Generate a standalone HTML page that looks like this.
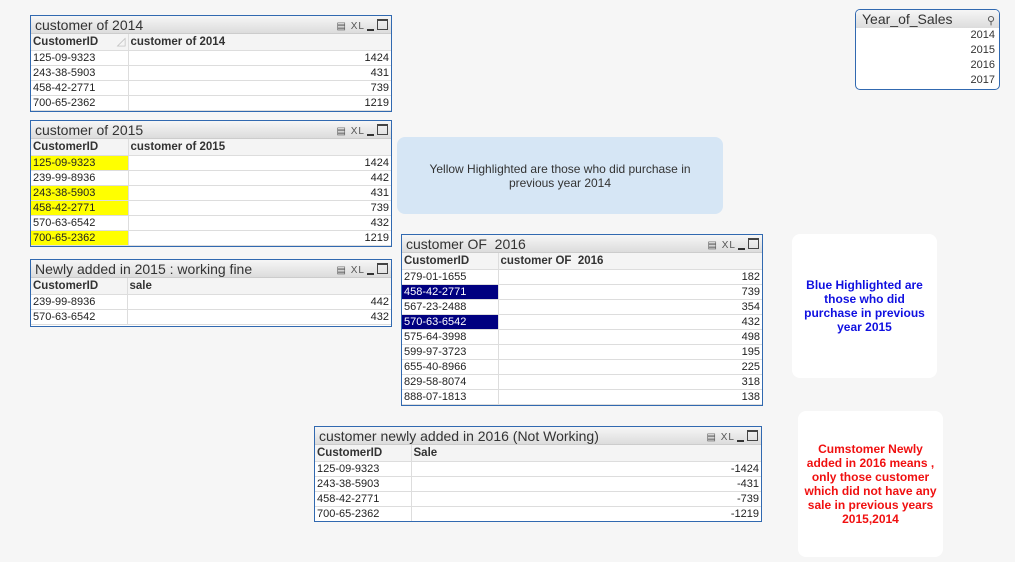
<!DOCTYPE html>
<html><head><meta charset="utf-8"><style>
body{margin:0;width:1015px;height:562px;background:#f6f6f6;font-family:"Liberation Sans",sans-serif;position:relative;overflow:hidden}
.box{position:absolute;border:1px solid #3169b0;background:#fff;box-sizing:border-box;overflow:hidden}
.t{height:18px;background:linear-gradient(#f6f6f6,#dcdcdc);font-size:14px;color:#333;line-height:18px;padding-left:4px;position:relative;border-bottom:1px solid #ccc;box-sizing:border-box}
.ic{position:absolute;right:3px;top:2px;font-size:10px;color:#555;letter-spacing:1px}
.ic b{display:inline-block;width:9px;height:8px;border:1px solid #444;border-top-width:2px;vertical-align:-1px;margin-left:3px}
.ic i{display:inline-block;width:7px;height:2px;background:#333;vertical-align:-2px;margin-left:2px}
table{border-collapse:collapse;width:100%;font-size:11px;color:#222;table-layout:fixed}
td{height:15px;padding:0 2px;border-bottom:1px solid #ddd;border-right:1px solid #ddd;line-height:14px;white-space:nowrap;overflow:hidden;box-sizing:border-box}
tr.h td{height:16px;font-weight:bold;color:#333;background:#f4f4f4;font-size:11.5px}
td.r{text-align:right;border-right:none}
.y{background:#ffff00}
.n{background:#000080;color:#fff}
.note{position:absolute;border-radius:8px;display:flex;align-items:center;justify-content:center;text-align:center;box-sizing:border-box}
</style></head><body>

<div class="box" style="left:30px;top:15px;width:362px;height:97px">
<div class="t">customer of 2014<span class="ic">&#9636; XL<i></i><b></b></span></div>
<table><colgroup><col style="width:97px"><col></colgroup>
<tr class="h"><td>CustomerID <span style="float:right;color:#bbb;font-weight:normal">◿</span></td><td class="r" style="text-align:left">customer of 2014</td></tr>
<tr><td>125-09-9323</td><td class="r">1424</td></tr>
<tr><td>243-38-5903</td><td class="r">431</td></tr>
<tr><td>458-42-2771</td><td class="r">739</td></tr>
<tr><td>700-65-2362</td><td class="r">1219</td></tr>
</table></div>

<div class="box" style="left:30px;top:120px;width:362px;height:127px">
<div class="t">customer of 2015<span class="ic">&#9636; XL<i></i><b></b></span></div>
<table><colgroup><col style="width:97px"><col></colgroup>
<tr class="h"><td>CustomerID</td><td class="r" style="text-align:left">customer of 2015</td></tr>
<tr><td class="y">125-09-9323</td><td class="r">1424</td></tr>
<tr><td>239-99-8936</td><td class="r">442</td></tr>
<tr><td class="y">243-38-5903</td><td class="r">431</td></tr>
<tr><td class="y">458-42-2771</td><td class="r">739</td></tr>
<tr><td>570-63-6542</td><td class="r">432</td></tr>
<tr><td class="y">700-65-2362</td><td class="r">1219</td></tr>
</table></div>

<div class="box" style="left:30px;top:259px;width:362px;height:68px">
<div class="t">Newly added in 2015 : working fine<span class="ic">&#9636; XL<i></i><b></b></span></div>
<table><colgroup><col style="width:96px"><col></colgroup>
<tr class="h"><td>CustomerID</td><td class="r" style="text-align:left">sale</td></tr>
<tr><td>239-99-8936</td><td class="r">442</td></tr>
<tr><td>570-63-6542</td><td class="r">432</td></tr>
</table></div>

<div class="box" style="left:401px;top:234px;width:362px;height:172px">
<div class="t">customer OF&nbsp; 2016<span class="ic">&#9636; XL<i></i><b></b></span></div>
<table><colgroup><col style="width:96px"><col></colgroup>
<tr class="h"><td>CustomerID</td><td class="r" style="text-align:left">customer OF&nbsp; 2016</td></tr>
<tr><td>279-01-1655</td><td class="r">182</td></tr>
<tr><td class="n">458-42-2771</td><td class="r">739</td></tr>
<tr><td>567-23-2488</td><td class="r">354</td></tr>
<tr><td class="n">570-63-6542</td><td class="r">432</td></tr>
<tr><td>575-64-3998</td><td class="r">498</td></tr>
<tr><td>599-97-3723</td><td class="r">195</td></tr>
<tr><td>655-40-8966</td><td class="r">225</td></tr>
<tr><td>829-58-8074</td><td class="r">318</td></tr>
<tr><td>888-07-1813</td><td class="r">138</td></tr>
</table></div>

<div class="box" style="left:314px;top:426px;width:448px;height:96px">
<div class="t">customer newly added in 2016 (Not Working)<span class="ic">&#9636; XL<i></i><b></b></span></div>
<table><colgroup><col style="width:96px"><col></colgroup>
<tr class="h"><td>CustomerID</td><td class="r" style="text-align:left">Sale</td></tr>
<tr><td>125-09-9323</td><td class="r">-1424</td></tr>
<tr><td>243-38-5903</td><td class="r">-431</td></tr>
<tr><td>458-42-2771</td><td class="r">-739</td></tr>
<tr><td style="border-bottom:none">700-65-2362</td><td class="r" style="border-bottom:none">-1219</td></tr>
</table></div>

<div class="box" style="left:855px;top:9px;width:145px;height:81px;border-radius:5px">
<div class="t" style="border-bottom:none;padding-left:6px">Year_of_Sales<span class="ic" style="font-size:11px">&#9906;</span></div>
<div style="font-size:11px;color:#333;text-align:right;padding-right:4px;line-height:15px">2014<br>2015<br>2016<br>2017</div>
</div>

<div class="note" style="left:397px;top:137px;width:326px;height:77px;background:#d6e6f5;font-size:12px;color:#333;padding:0 20px">Yellow Highlighted are those who did purchase in previous year 2014</div>
<div class="note" style="left:792px;top:234px;width:145px;height:144px;background:#fff;font-size:12px;font-weight:bold;color:#1010e0;padding:0 8px;line-height:14px">Blue Highlighted are those who did purchase in previous year 2015</div>
<div class="note" style="left:798px;top:411px;width:145px;height:146px;background:#fff;font-size:12px;font-weight:bold;color:#f01010;padding:0 5px;line-height:14px">Cumstomer Newly added in 2016 means , only those customer which did not have any sale in previous years 2015,2014</div>

</body></html>
